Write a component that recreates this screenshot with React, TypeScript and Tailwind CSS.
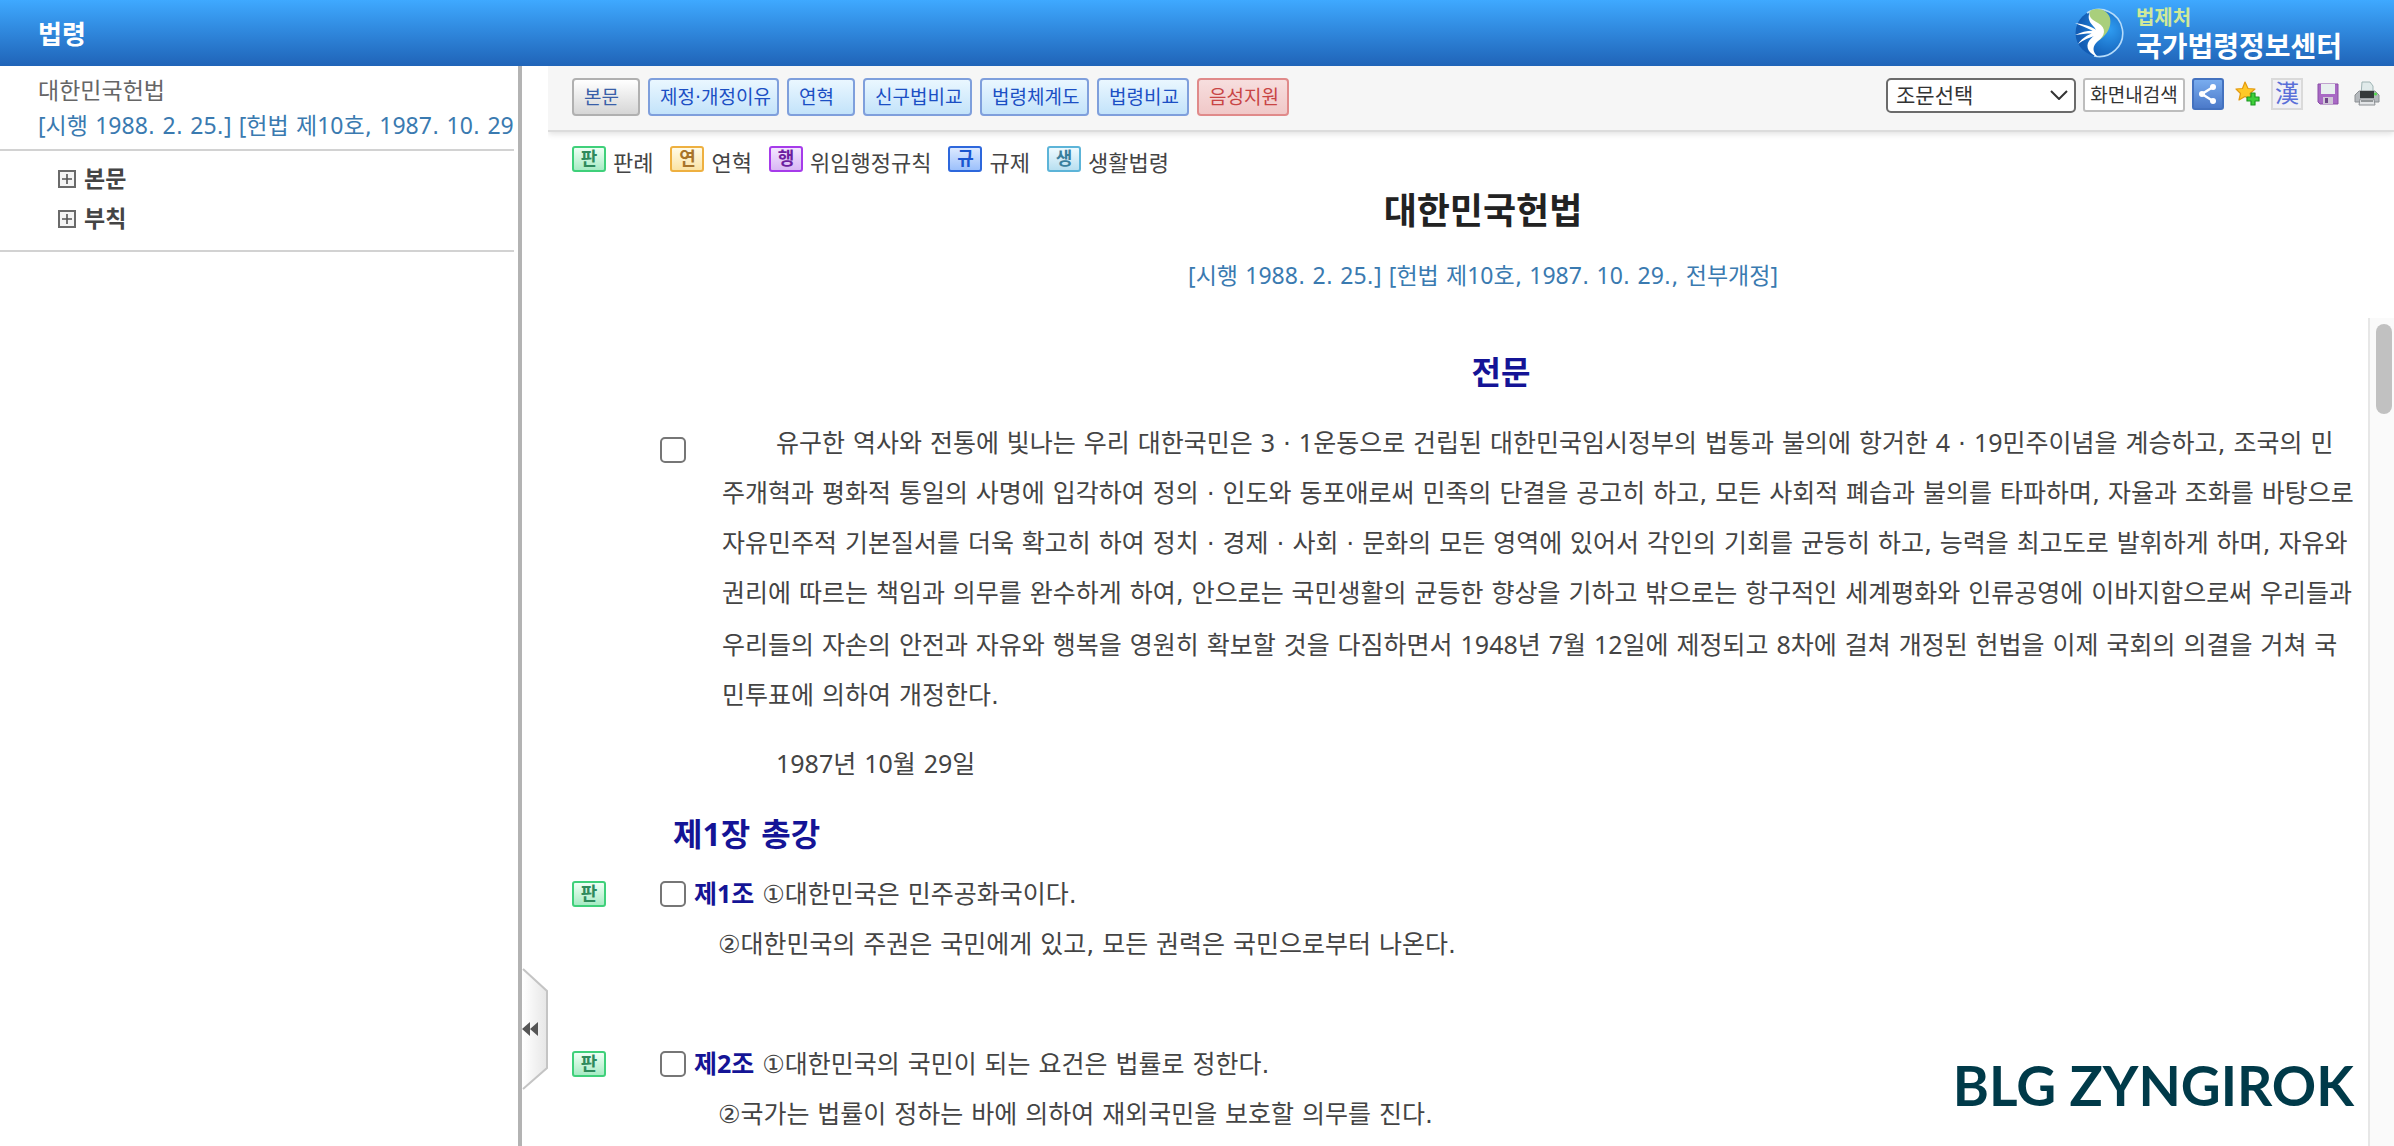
const sans = "font-['DejaVu_Sans','Noto_Sans_CJK_KR',sans-serif]";

const blue = "border-[#7f9fdc] from-[#eaf7ff] to-[#c3e3fa] text-[#1b4fc4]";
const green = "border-[#3fd07a] from-[#effff5] to-[#a6ebc4] text-[#2f8a5c]";

const tabs = [
  { label: "본문", width: "w-[68px]", tone: "border-[#b0b0b0] from-white to-[#d6d6d6] text-[#3a5fa8]" },
  { label: "제정·개정이유", width: "w-[131px]", tone: blue },
  { label: "연혁", width: "w-[68px]", tone: blue },
  { label: "신구법비교", width: "w-[109px]", tone: blue },
  { label: "법령체계도", width: "w-[109px]", tone: blue },
  { label: "법령비교", width: "w-[92px]", tone: blue },
  { label: "음성지원", width: "w-[92px]", tone: "border-[#e08a8a] from-[#f7dede] to-[#f0c8c8] text-[#c84444]" },
];

const legend = [
  { mark: "판", label: "판례", tone: green },
  { mark: "연", label: "연혁", tone: "border-[#eeb040] from-[#fffbe8] to-[#fbe3a4] text-[#a8742a]" },
  { mark: "행", label: "위임행정규칙", tone: "border-[#a63bea] from-[#f3e6ff] to-[#d9b8f5] text-[#6c1fa0]" },
  { mark: "규", label: "규제", tone: "border-[#2d67dc] from-[#dce9ff] to-[#9cc0fb] text-[#1a55d0]" },
  { mark: "생", label: "생활법령", tone: "border-[#5cb4d8] from-[#eefaff] to-[#b8dff0] text-[#3a7f9c]" },
];

const articles = [
  {
    no: "제1조",
    first: "①대한민국은 민주공화국이다.",
    second: "②대한민국의 주권은 국민에게 있고, 모든 권력은 국민으로부터 나온다.",
  },
  {
    no: "제2조",
    first: "①대한민국의 국민이 되는 요건은 법률로 정한다.",
    second: "②국가는 법률이 정하는 바에 의하여 재외국민을 보호할 의무를 진다.",
  },
];

const preamble = [
  "유구한 역사와 전통에 빛나는 우리 대한국민은 3 · 1운동으로 건립된 대한민국임시정부의 법통과 불의에 항거한 4 · 19민주이념을 계승하고, 조국의 민",
  "주개혁과 평화적 통일의 사명에 입각하여 정의 · 인도와 동포애로써 민족의 단결을 공고히 하고, 모든 사회적 폐습과 불의를 타파하며, 자율과 조화를 바탕으로",
  "자유민주적 기본질서를 더욱 확고히 하여 정치 · 경제 · 사회 · 문화의 모든 영역에 있어서 각인의 기회를 균등히 하고, 능력을 최고도로 발휘하게 하며, 자유와",
  "권리에 따르는 책임과 의무를 완수하게 하여, 안으로는 국민생활의 균등한 향상을 기하고 밖으로는 항구적인 세계평화와 인류공영에 이바지함으로써 우리들과",
  "우리들의 자손의 안전과 자유와 행복을 영원히 확보할 것을 다짐하면서 1948년 7월 12일에 제정되고 8차에 걸쳐 개정된 헌법을 이제 국회의 의결을 거쳐 국",
  "민투표에 의하여 개정한다.",
];

// Digits and brackets are set in Noto Sans, everything else in the page font
function Text({ children }: { children: string }) {
  return children.split(/([\d[\]]+)/).map((part, i) =>
    i % 2 ? (
      <span key={i} className="font-['Noto_Sans']">
        {part}
      </span>
    ) : (
      part
    ),
  );
}

function Mark({ children, tone }: { children: string; tone: string }) {
  return (
    <span
      className={`flex h-[26px] w-[34px] shrink-0 items-center justify-center rounded-[3px] border-2 bg-linear-to-b text-[18px] leading-none font-bold ${tone}`}
    >
      {children}
    </span>
  );
}

function Check({ label }: { label: string }) {
  return (
    <input
      type="checkbox"
      aria-label={label}
      className="size-[26px] shrink-0 appearance-none rounded-[5px] border-2 border-[#767676] bg-white checked:bg-[#1b6fd0]"
    />
  );
}

function Logo() {
  return (
    <svg viewBox="0 0 50 50" className="size-[50px]" aria-hidden>
      <defs>
        <radialGradient id="globe" cx="0.72" cy="0.42" r="0.65">
          <stop offset="0" stopColor="#2f9df2" />
          <stop offset="1" stopColor="#125cb4" />
        </radialGradient>
      </defs>
      <circle cx="25" cy="25" r="23.500" fill="url(#globe)" />
      <path d="M13 5 A23.500 23.500 0 1 1 20 48" fill="none" stroke="#b5dbfa" strokeWidth="1.6" />
      <path d="M16 3 C23 -1 33 1 36 10 C38 20 32 28 24 33 C28 26 28 20 22 16 C17 13 14 8 16 3Z" fill="#a9cf7c" />
      <path
        d="M17 2 C13 8 18 12 24 15 C33 20 31 28 24 33 C18 38 18 44 24 49 C15 46 11 39 15 33 C18 29 22 27 22 22 C21 18 10 13 17 2Z"
        fill="#fff"
      />
      <path
        d="M1 15 C9 16 17 18 24 23 L24 26 C17 21 10 19 1 15Z M1 27 C9 23 16 22 24 23 L24 26 C16 25 9 26 1 27Z M4 36 C9 29 16 25 24 24 L24 27 C16 29 9 32 4 36Z"
        fill="#fff"
      />
    </svg>
  );
}

function ShareIcon() {
  return (
    <svg viewBox="0 0 32 32" className="size-8" aria-hidden>
      <defs>
        <linearGradient id="share" x2="0" y2="1">
          <stop offset="0" stopColor="#7aaef0" />
          <stop offset="1" stopColor="#4a78c8" />
        </linearGradient>
      </defs>
      <rect x="1" y="1" width="30" height="30" rx="2" fill="url(#share)" stroke="#4472bf" strokeWidth="2" />
      <path d="M21 9 L10 16 L21 23" fill="none" stroke="#fff" strokeWidth="2.5" />
      <circle cx="21" cy="9" r="3" fill="#fff" />
      <circle cx="10" cy="16" r="3" fill="#fff" />
      <circle cx="21" cy="23" r="3" fill="#fff" />
    </svg>
  );
}

function StarIcon() {
  return (
    <svg viewBox="0 0 26 26" className="size-[26px]" aria-hidden>
      <path
        d="M10 1 L13 7.5 L20 8 L15 12.5 L16.500 19 L10 15.500 L4 19 L5.500 12.500 L1 8 L7.500 7.500Z"
        fill="#ffc928"
        stroke="#e39a10"
        strokeWidth="1.2"
        strokeLinejoin="round"
      />
      <path d="M16 12h4v4h4v4h-4v4h-4v-4h-4v-4h4Z" fill="#3fcf3a" stroke="#1d9a22" strokeWidth="1.2" strokeLinejoin="round" />
    </svg>
  );
}

function SaveIcon() {
  return (
    <svg viewBox="0 0 22 22" className="size-[22px]" aria-hidden>
      <path d="M1 1h20v20H3l-2-2Z" fill="#a869c4" stroke="#8a4fa6" strokeWidth="1" />
      <rect x="4" y="1" width="14" height="10" fill="#e8efef" />
      <rect x="6" y="14" width="10" height="7" fill="#cfc6d6" />
      <rect x="8" y="15" width="3" height="5" fill="#6e4688" />
    </svg>
  );
}

function PrintIcon() {
  return (
    <svg viewBox="0 0 26 26" className="size-[26px]" aria-hidden>
      <path d="M8 1h8l3 4v9H7Z" fill="#e0eaea" stroke="#9fb4b4" strokeWidth="1" />
      <path d="M1 14l4-4h16l4 4v7H1Z" fill="#b4b8bc" stroke="#8c9094" strokeWidth="1" />
      <path d="M6 10h14v7H6Z" fill="#35393b" />
      <path d="M6 18h14l1 6H5Z" fill="#e2e4e6" stroke="#8c9094" strokeWidth="1" />
      <path d="M7 20h12" stroke="#707476" strokeWidth="1.4" />
      <circle cx="21.500" cy="13" r="1.500" fill="#4fdc4a" />
    </svg>
  );
}

function Header() {
  return (
    <header className="flex h-[66px] shrink-0 items-center justify-between bg-linear-to-b from-[#3fa9ff] to-[#2064b8] pr-[52px] pl-[38px] text-white">
      <h1 className="pt-1 text-[26px] leading-8 font-bold">법령</h1>
      <a href="#" className="flex items-center gap-3">
        <Logo />
        <span className="flex flex-col pt-[5px] font-bold">
          <span className="text-[20px] leading-6 text-[#cfe99a]">법제처</span>
          <span className="text-[28px] leading-9">국가법령정보센터</span>
        </span>
      </a>
    </header>
  );
}

function Sidebar() {
  return (
    <aside className="w-[522px] shrink-0 border-r-4 border-[#b3b3b3] pr-1">
      <div className="border-b-2 border-[#d2d2d2] pt-2 pb-[6px] pl-[38px] text-[23px] leading-[34px] whitespace-nowrap">
        <p className="text-[#666]">대한민국헌법</p>
        <p className="text-[#3a7ab0]">
          <Text>[시행 1988. 2. 25.] [헌법 제10호, 1987. 10. 29</Text>
        </p>
      </div>
      <ul className="border-b-2 border-[#d2d2d2] pt-2 pb-[11px] pl-[58px] text-[23px] leading-10 font-bold text-[#444]">
        {["본문", "부칙"].map((name) => (
          <li key={name}>
            <button type="button" className="flex items-center gap-2">
              <svg viewBox="0 0 18 18" className="size-[18px]" aria-hidden>
                <rect x="1" y="1" width="16" height="16" fill="#f4f4f4" stroke="#6a6a6a" strokeWidth="2" />
                <path d="M9 4v10M4 9h10" stroke="#555" strokeWidth="1.6" />
              </svg>
              {name}
            </button>
          </li>
        ))}
      </ul>
    </aside>
  );
}

function Toolbar() {
  return (
    <div className="flex items-start justify-between border-b-2 border-[#dcdcdc] bg-[#f6f6f6] pt-3 pr-[14px] pb-[14px] pl-6 shadow-[0_2px_6px_rgba(0,0,0,0.12)]">
      <nav className="flex gap-2">
        {tabs.map((t) => (
          <button
            key={t.label}
            type="button"
            className={`h-[38px] rounded-[4px] border-2 bg-linear-to-b pl-[10px] text-left text-[19px] leading-[30px] whitespace-nowrap ${t.width} ${t.tone}`}
          >
            {t.label}
          </button>
        ))}
      </nav>
      <div className="flex items-start">
        <div className="relative">
          <select
            aria-label="조문선택"
            className="h-[35px] w-[190px] appearance-none rounded-[5px] border-2 border-[#6b6b6b] bg-white pl-2 text-[21px] leading-7 text-[#333]"
          >
            <option>조문선택</option>
          </select>
          <svg viewBox="0 0 18 10" className="pointer-events-none absolute top-3 right-2 h-[10px] w-[18px]" aria-hidden>
            <path d="M1 1l8 8 8-8" fill="none" stroke="#333" strokeWidth="2" />
          </svg>
        </div>
        <button
          type="button"
          className="ml-[7px] h-[34px] w-[102px] rounded-[3px] border-2 border-[#bdbdbd] bg-white text-[19px] leading-7 whitespace-nowrap text-[#333]"
        >
          화면내검색
        </button>
        <div className="ml-[7px] flex h-8 items-center">
          <button type="button" aria-label="공유">
            <ShareIcon />
          </button>
          <button type="button" aria-label="즐겨찾기" className="ml-[11px]">
            <StarIcon />
          </button>
          <button
            type="button"
            className="ml-[10px] size-8 border-2 border-[#dadada] bg-[#f1f1f4] text-[24px] leading-6 text-[#5a6fd8]"
          >
            漢
          </button>
          <button type="button" aria-label="저장" className="ml-[14px]">
            <SaveIcon />
          </button>
          <button type="button" aria-label="인쇄" className="ml-[15px]">
            <PrintIcon />
          </button>
        </div>
      </div>
    </div>
  );
}

function LawText() {
  return (
    <div className="relative min-h-0 flex-1 overflow-hidden text-[25px] leading-[50px] text-[#444]">
      <div className="pr-[30px] pl-6">
        <h3 className="pt-[31px] pl-[66px] text-center text-[32px] leading-[48px] font-bold text-[#141496]">전문</h3>
        <div className="flex items-start pt-5 pl-[88px]">
          <div className="flex h-[66px] items-center">
            <Check label="전문 선택" />
          </div>
          <div className="pl-9">
            <div className="break-all">
              {preamble.map((line, i) => (
                <p key={line} className={i === 0 ? "indent-[54px]" : ""}>
                  <Text>{line}</Text>
                </p>
              ))}
            </div>
            <p className="pt-[17px] indent-[54px]">
              <Text>1987년 10월 29일</Text>
            </p>
          </div>
        </div>
        <h3 className="pt-[19px] pl-[101px] text-[32px] font-bold text-[#141496]">
          <Text>제1장 총강</Text>
        </h3>
        {articles.map((a) => (
          <article key={a.no} className="pt-2 pb-[60px]">
            <div className="flex items-center">
              <Mark tone={green}>판</Mark>
              <label className="flex items-center pl-[54px]">
                <Check label={a.no} />
                <span className="pl-2">
                  <b className="text-[#141496]">
                    <Text>{a.no}</Text>
                  </b>{" "}
                  {a.first}
                </span>
              </label>
            </div>
            <p className="pl-[146px]">{a.second}</p>
          </article>
        ))}
      </div>
      {/* scroll bar */}
      <div className="absolute inset-y-0 right-0 w-[26px] border-l-2 border-[#e7e7e7] bg-[#fafafa]">
        <div className="absolute top-[6px] right-[2px] h-[90px] w-4 rounded-full bg-[#c1c1c1]" />
      </div>
      <p className="absolute right-10 bottom-[28px] font-['Lato',sans-serif] text-[55px] leading-[66px] font-bold text-[#003a49]">
        BLG ZYNGIROK
      </p>
    </div>
  );
}

export default function App() {
  return (
    <div className={`flex h-screen flex-col overflow-hidden bg-white ${sans}`}>
      <Header />
      <div className="flex min-h-0 flex-1">
        <Sidebar />
        <div className="relative w-[26px] shrink-0">
          <button type="button" aria-label="목록 닫기" className="absolute right-0 bottom-[56px]">
            <svg viewBox="0 0 26 122" className="h-[122px] w-[26px]" aria-hidden>
              <defs>
                <linearGradient id="handle">
                  <stop offset="0" stopColor="#fff" />
                  <stop offset="1" stopColor="#e6e6e6" />
                </linearGradient>
              </defs>
              <path d="M1 1L25 23V100L1 121" fill="url(#handle)" stroke="#c4c4c4" strokeWidth="2" />
              <path d="M0 61l8-7v14ZM8 61l8-7v14Z" fill="#555" />
            </svg>
          </button>
        </div>
        <main className="flex min-w-0 flex-1 flex-col overflow-hidden">
          <Toolbar />
          <ul className="flex gap-[17px] pt-[14px] pl-6 text-[22px] leading-9 text-[#444]">
            {legend.map((l) => (
              <li key={l.label} className="flex gap-[7px]">
                <Mark tone={l.tone}>{l.mark}</Mark>
                {l.label}
              </li>
            ))}
          </ul>
          <h2 className="pt-1 pl-6 text-center text-[36px] leading-[52px] font-bold text-[#222]">대한민국헌법</h2>
          <p className="pt-5 pb-[25px] pl-6 text-center text-[23px] leading-[34px] text-[#3a7ab0]">
            <Text>[시행 1988. 2. 25.] [헌법 제10호, 1987. 10. 29., 전부개정]</Text>
          </p>
          <LawText />
        </main>
      </div>
    </div>
  );
}
